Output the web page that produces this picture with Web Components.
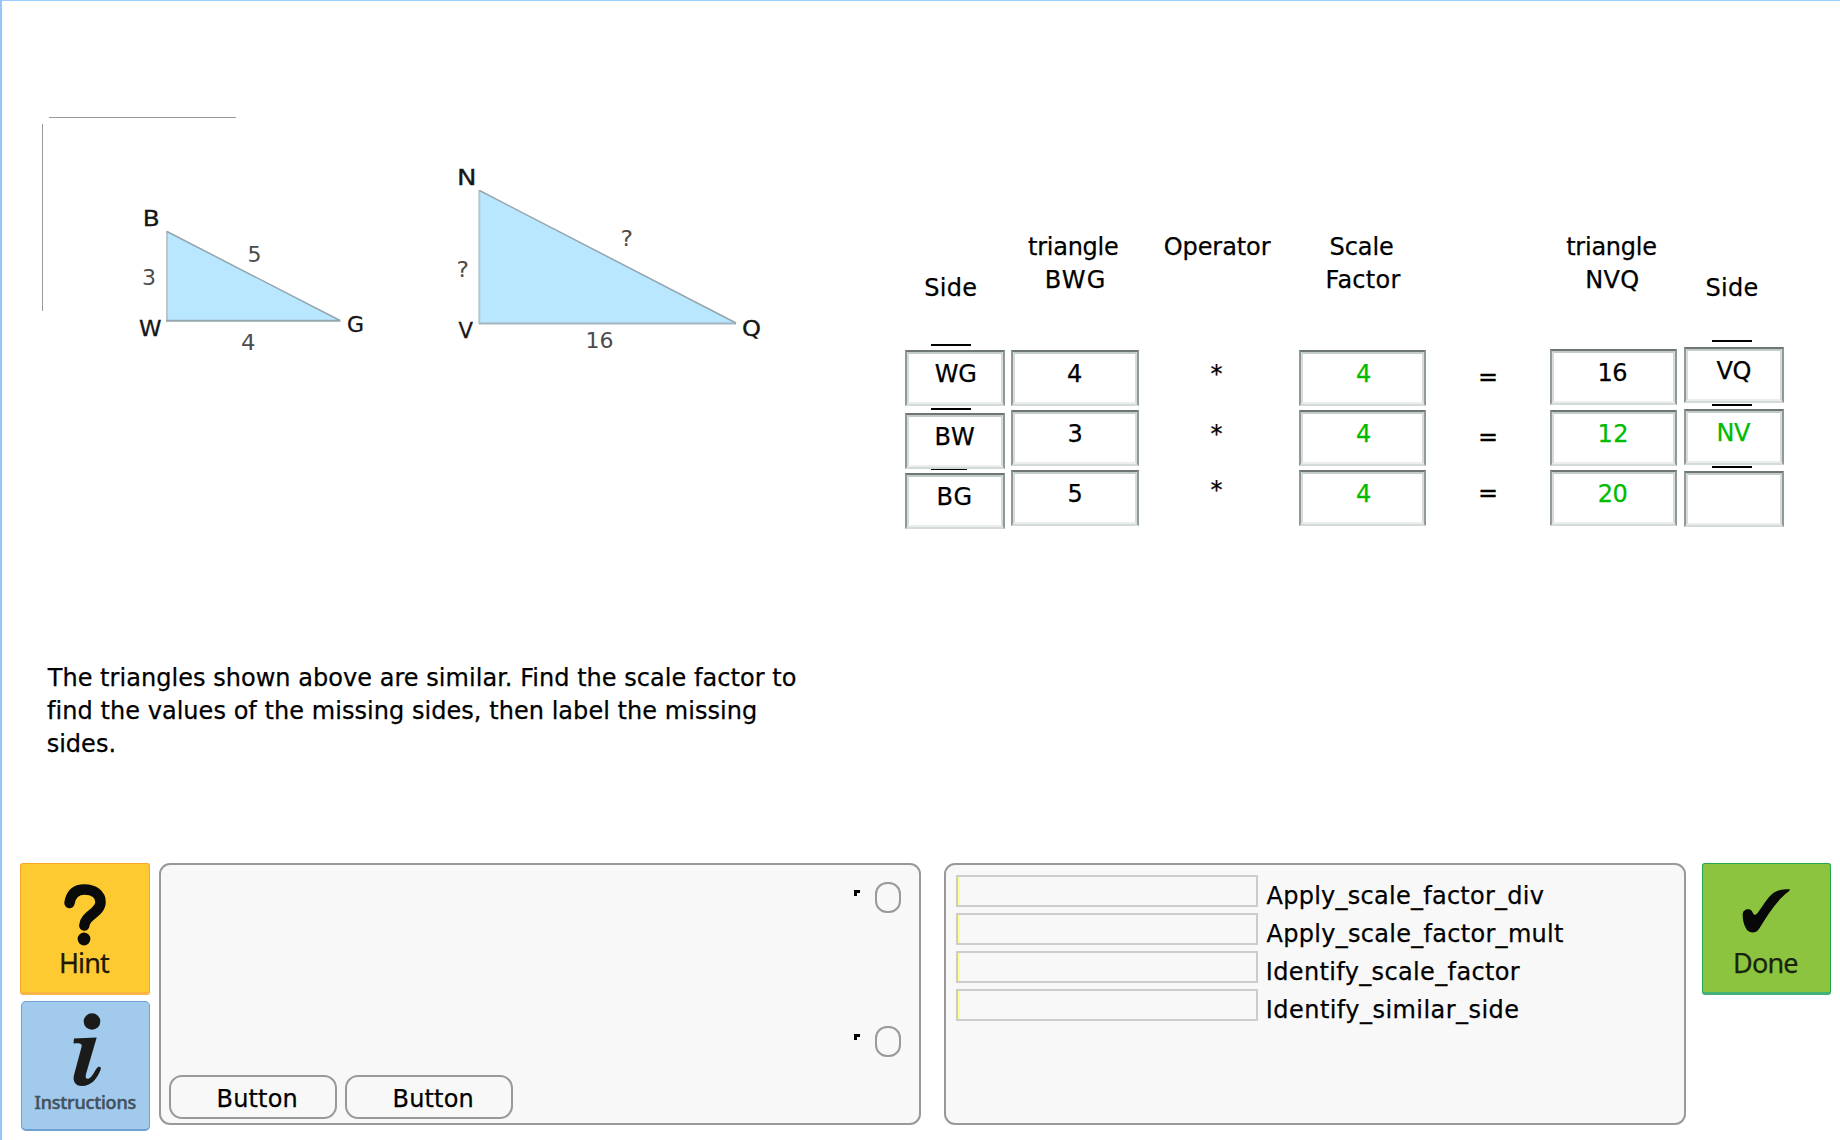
<!DOCTYPE html>
<html lang="en">
<head>
<meta charset="utf-8">
<title>Similar Triangles Tutor</title>
<style>
html,body{margin:0;padding:0;background:#fff}
body{width:1840px;height:1140px;overflow:hidden;font-family:Verdana,"DejaVu Sans",sans-serif}
</style>
</head>
<body>
<tutor-page></tutor-page>
<script>
const make = (name, html, init) => customElements.define(name, class extends HTMLElement {
  connectedCallback() {
    if (this.shadowRoot) return;
    this.attachShadow({mode: 'open'}).innerHTML = html(this);
    if (init) init(this, this.shadowRoot);
  }
});
const ctx = document.createElement('canvas').getContext('2d');

/* One line of text whose visible ink starts at x and spans w pixels. */
make('fit-text', el => `<style>
:host{display:block;white-space:nowrap;font-size:24px;line-height:33px;height:33px;-webkit-text-stroke:.25px currentColor}
span{display:inline-block}
</style><span>${el.getAttribute('t')}</span>`, (el, root) => {
  const t = el.getAttribute('t'), w = +el.getAttribute('w'), x = +el.getAttribute('x');
  const cs = getComputedStyle(el);
  ctx.font = `${cs.fontWeight} ${cs.fontSize} ${cs.fontFamily}`;
  const m = ctx.measureText(t), ink = m.actualBoundingBoxRight + m.actualBoundingBoxLeft;
  const s = root.querySelector('span');
  s.style.marginLeft = (x + m.actualBoundingBoxLeft) + 'px';
  if (w && t.length > 1) s.style.letterSpacing = ((w - ink) / (t.length - 1)) + 'px';
});

make('answer-cell', el => `<style>
:host{display:block;box-sizing:border-box;height:56px;border:2px solid #8f9997;border-top-color:#6e7674;border-bottom-color:#d4dad9;background:#fff}
div{height:52px;box-sizing:border-box;border:2px solid #d5dcdb;border-top-color:#c2cbca;border-bottom-color:#ebeeed;padding-top:4px}
</style><div><slot></slot></div>`);

make('over-line', el => `<style>:host{display:block;height:2px;width:40px;margin-left:26px;background:#000}</style>`);

make('triangle-figure', el => {
  const T = (x, y, w, t, c) => `<text x="${x}" y="${y}" textLength="${w}" lengthAdjust="spacingAndGlyphs" fill="${c}"${c == '#161616' ? ' stroke="#161616" stroke-width=".3"' : ''}>${t}</text>`;
  const k = '#161616', g = '#4c4c4c';
  return `<style>:host{display:block;height:400px}svg{display:block;font:21px Verdana,"DejaVu Sans",sans-serif}</style>
<svg width="860" height="400" viewBox="2 1 860 400">
<path d="M49 117.5H236M42.5 124V311" stroke="#999" fill="none"/>
<path d="M167 231.5V320.5H340Z" fill="#b8e7ff"/>
<path d="M167 231V321" stroke="#bfc4c6" stroke-width="2"/><path d="M166 320.8H340.5" stroke="#96a6ae" stroke-width="2"/><path d="M167 231.5L340 320.5" stroke="#93a5ad" stroke-width="1.5"/>
<path d="M480 191V323H736Z" fill="#b8e7ff"/>
<path d="M479.3 190V324" stroke="#b4c6ce" stroke-width="2"/><path d="M479 323.5H736" stroke="#a3b6bf" stroke-width="2"/><path d="M479.5 190.5L736 323" stroke="#93a5ad" stroke-width="1.5"/>
${T(142.7,226,17,'B',k)}${T(139,336,22.5,'W',k)}${T(347,332.3,17,'G',k)}
${T(142,285,14,'3',g)}${T(247.5,262,14,'5',g)}${T(241,350,14.5,'4',g)}
${T(457,185,19.5,'N',k)}${T(458.5,338,14.5,'V',k)}${T(742,336.3,19,'Q',k)}
${T(456.5,277,12.5,'?',g)}${T(620.5,245.5,12.5,'?',g)}${T(585.5,348,28,'16',g)}
</svg>`;
});

const cell = (mt, x, w, t, c) => `<answer-cell style="margin-top:${mt}px${c ? ';color:#0b0' : ''}">${t ? `<fit-text x="${x}" w="${w}" t="${t}"></fit-text>` : ''}</answer-cell>`;
make('scale-table', el => `<style>
:host{display:flex;align-items:flex-start;height:310px}
section{flex:none}
</style>
<section style="width:100px;padding-top:41px">
<fit-text x="20.3" w="51" t="Side"></fit-text>
<over-line style="margin-top:39px"></over-line>${cell(4,25.7,40.5,'WG')}
<over-line style="margin-top:2px"></over-line>${cell(3,27.5,37.5,'BW')}
<over-line style="height:1px;width:36px"></over-line>${cell(3,29.5,32,'BG')}
</section>
<section style="width:128px;margin-left:6px">
<fit-text x="17" w="90" t="triangle"></fit-text><fit-text x="35.7" w="57" t="BWG"></fit-text>
${cell(53,53,0,'4')}${cell(4,53.5,0,'3')}${cell(4,53.5,0,'5')}
</section>
<section style="width:106px;margin-left:25px">
<fit-text x="0.7" w="106" t="Operator"></fit-text>
<fit-text style="margin-top:94px" x="46.5" w="0" t="*"></fit-text>
<fit-text style="margin-top:27px" x="46.5" w="0" t="*"></fit-text>
<fit-text style="margin-top:23px" x="46.5" w="0" t="*"></fit-text>
</section>
<section style="width:127px;margin-left:29px">
<fit-text x="31.5" w="62.5" t="Scale"></fit-text><fit-text x="28.5" w="73" t="Factor"></fit-text>
${cell(53,54,0,'4',1)}${cell(4,54,0,'4',1)}${cell(4,54,0,'4',1)}
</section>
<section style="width:20px;margin-left:54px">
<fit-text style="margin-top:130px" x="0" w="0" t="="></fit-text>
<fit-text style="margin-top:27px" x="0" w="0" t="="></fit-text>
<fit-text style="margin-top:23px" x="0" w="0" t="="></fit-text>
</section>
<section style="width:127px;margin-left:50px">
<fit-text x="16.2" w="90" t="triangle"></fit-text><fit-text x="37.3" w="51" t="NVQ"></fit-text>
${cell(52,45.5,26.7,'16')}${cell(5,45.5,26.7,'12',1)}${cell(4,44.7,27.7,'20',1)}
</section>
<section style="width:100px;margin-left:7px;padding-top:41px">
<fit-text x="22.5" w="51" t="Side"></fit-text>
<over-line style="margin-top:35px;margin-left:28px"></over-line>${cell(5,28.5,34,'VQ')}
<over-line style="margin-top:1px;margin-left:28px"></over-line>${cell(3,30.5,32.5,'NV',1)}
<over-line style="margin-top:1px;margin-left:28px"></over-line>${cell(3)}
</section>`);

make('skill-row', el => `<style>
:host{display:flex;height:32px;margin-bottom:6px}
i{flex:none;box-sizing:border-box;width:302px;height:32px;border:2px solid #ccc}
i:before{content:"";display:block;width:2px;height:28px;background:#ffff8c}
div{padding-top:5px}
</style><i></i><div><slot></slot></div>`);

make('panel-box', el => `<style>
:host{display:block;flex:none;box-sizing:border-box;height:262px;border:2px solid #999;border-radius:11px;background:#f8f8f8}
</style><slot></slot>`);

make('push-button', el => `<style>
:host{display:block;box-sizing:border-box;width:168px;height:44px;border:2px solid #999;border-radius:13px;padding-top:6px}
</style><slot></slot>`);

make('scroll-knob', el => `<style>
:host{display:flex;justify-content:flex-end;align-items:flex-start;gap:15px;padding-right:18px;height:31px}
svg{margin-top:8px}
i{box-sizing:border-box;width:26px;height:31px;border:2px solid #999;border-radius:12px}
</style><svg width="6" height="7"><path d="M0 0H6V3H3V6H0Z" fill="#000"/></svg><i></i>`);

make('hint-button', el => `<style>
:host{display:block;box-sizing:border-box;width:130px;height:132px;border:1.5px solid #f7a626;border-bottom:3px solid #f9b544;border-radius:3px;background:#fdcb31;color:#1c1808}
svg{display:block}fit-text{font:27px/33px "Noto Sans",sans-serif;margin-top:-3px}
</style><svg width="127" height="85" viewBox="21 864 127 85"><path d="M69.500 903C71 893.500 76.500 889.500 84.500 889.500C94 889.500 100.500 894.500 100.500 902C100.500 913 85 915 84.300 925.500" fill="none" stroke="#0a0a0a" stroke-width="10.500" stroke-linecap="round"/><circle cx="84" cy="939" r="6.400" fill="#0a0a0a"/></svg><fit-text x="40" w="49" t="Hint"></fit-text>`);

make('info-button', el => `<style>
:host{display:block;box-sizing:border-box;width:129px;height:130px;margin:6px 0 0 1px;border:1.5px solid #6f9fd4;border-bottom-width:2px;border-radius:5px;background:#a1caec;color:#43525e}
svg{display:block}fit-text{font:500 18px/24px "Noto Sans",sans-serif;height:24px;margin-top:-1px;-webkit-text-stroke-width:.5px}
</style><svg width="127" height="89" viewBox="22 1002 127 89"><g fill="#1b1b1b"><circle cx="92" cy="1021.500" r="8.300"/><path d="M74 1038.500L96.700 1037.500L86 1074C85 1078.500 86.500 1079.500 89 1078.500C93 1076.500 94.500 1070 98 1067C100.500 1066 101.500 1068 100.500 1070C97 1079 91 1086 82 1086C75 1086 72.500 1081 74 1075L81.500 1047C82.500 1043.500 80 1042.500 73.500 1043.500Z"/></g></svg><fit-text x="12.5" w="101" t="Instructions"></fit-text>`);

make('done-button', el => `<style>
:host{display:block;box-sizing:border-box;width:129px;height:132px;border:1.5px solid #25a84a;border-bottom:3px solid #45b077;border-radius:3px;background:#8dc43f;color:#182311}
svg{display:block}fit-text{font:27px/33px "Noto Sans",sans-serif;margin-top:-3px}
</style><svg width="127" height="85" viewBox="1703 864 127 85"><path d="M1742.700 914C1743 910 1747 908.500 1750 909.500C1753 911 1752.500 914 1755 915C1758 914.500 1764 902 1771 895C1777 889.500 1782 889.300 1789.500 889.200C1790.500 890 1789 891.500 1788 892C1776 901 1767 916 1759 929C1756 933.500 1750 933.500 1747 930C1743.500 925 1742.700 919 1742.700 914Z" fill="#080808"/></svg><fit-text x="32" w="62.300" t="Done"></fit-text>`);

const skill = (x, w, t) => `<skill-row><fit-text x="${x}" w="${w}" t="${t}"></fit-text></skill-row>`;
make('tutor-page', el => `<style>
:host{display:block;box-sizing:border-box;width:1840px;height:1140px;border-left:2px solid #96c5fa;border-top:1px solid #99ccff;color:#000}
header{display:flex;height:661px}
triangle-figure{flex:none;width:903px}
scale-table{margin-top:230px}
main{height:201px}
footer{display:flex;align-items:flex-start;padding-left:18px}
.b{display:flex;gap:8px;margin:18px 0 0 8px}
</style>
<header><triangle-figure></triangle-figure><scale-table></scale-table></header>
<main>
<fit-text x="44.7" w="749" t="The triangles shown above are similar. Find the scale factor to"></fit-text>
<fit-text x="45" w="709" t="find the values of the missing sides, then label the missing"></fit-text>
<fit-text x="45.700" w="66.700" t="sides."></fit-text>
</main>
<footer>
<div><hint-button></hint-button><info-button></info-button></div>
<panel-box style="width:762px;margin-left:9px">
<scroll-knob style="margin-top:17px"></scroll-knob>
<scroll-knob style="margin-top:113px"></scroll-knob>
<div class="b"><push-button><fit-text x="47.5" w="78" t="Button"></fit-text></push-button><push-button><fit-text x="47.5" w="78" t="Button"></fit-text></push-button></div>
</panel-box>
<panel-box style="width:742px;margin-left:23px;padding:10px 0 0 10px">
${skill(8.500,277.300,'Apply_scale_factor_div')}${skill(8.500,296.500,'Apply_scale_factor_mult')}${skill(9.800,252,'Identify_scale_factor')}${skill(9.800,250.500,'Identify_similar_side')}
</panel-box>
<done-button style="margin-left:16px"></done-button>
</footer>`);
</script>
</body>
</html>
